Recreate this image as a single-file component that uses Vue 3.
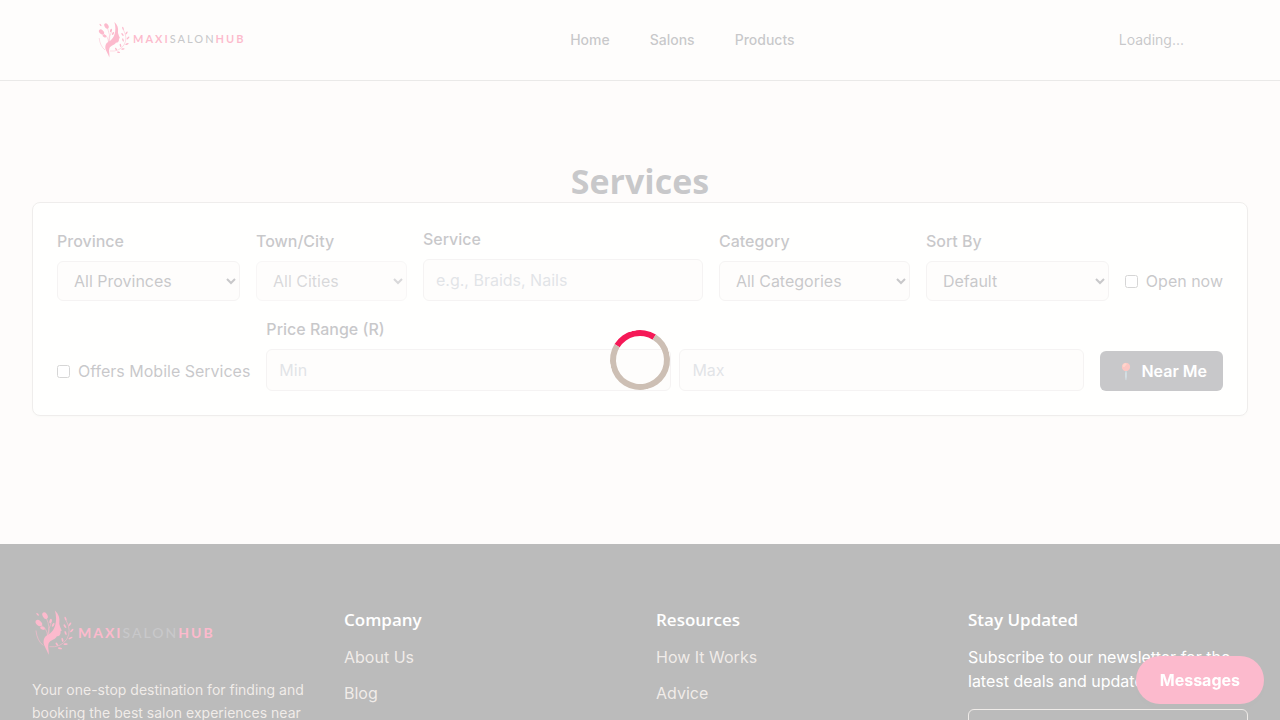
<script setup>
import { ref } from 'vue'

const navLinks = ['Home', 'Salons', 'Products']
const province = ref('All Provinces')
const city = ref('All Cities')
const service = ref('')
const category = ref('All Categories')
const sortBy = ref('Default')
const openNow = ref(false)
const mobile = ref(false)
const minPrice = ref('')
const maxPrice = ref('')
const email = ref('')
const columns = [
  { title: 'Company', links: ['About Us', 'Blog'] },
  { title: 'Resources', links: ['How It Works', 'Advice'] },
]
</script>

<template>
  <div class="page">
    <svg class="symbols" aria-hidden="true">
      <symbol id="flora" viewBox="0 0 37 40">
        <g fill="#f51957">
          <path d="M18.400 2C21.500 5 22.500 8 22 11.500C21.700 13 22.500 14 22.800 15.500L23.900 18L22.900 18.800L23 20C22.500 22.300 21.500 22.800 20 22.600C18.500 25.500 15 25.500 13.500 28C12.300 31 14 34 13.300 37.500C12.500 34 9 30 9.300 27C9.500 23 12 22 14.500 20.500C18 18 21 11 18.400 2Z" />
          <ellipse cx="5.500" cy="12" rx="2" ry="3" transform="rotate(-48 5.500 12)" />
          <ellipse cx="10.500" cy="6" rx="1.900" ry="2.900" transform="rotate(-30 10.500 6)" />
          <ellipse cx="4.500" cy="5" rx="0.600" ry="1.400" transform="rotate(-40 4.500 5)" />
          <ellipse cx="8.500" cy="16" rx="1.200" ry="2" transform="rotate(-70 8.500 16)" />
          <ellipse cx="15" cy="10.500" rx="1" ry="1.900" transform="rotate(15 15 10.500)" />
          <ellipse cx="17" cy="13.500" rx="0.800" ry="1.700" transform="rotate(30 17 13.500)" />
          <ellipse cx="27" cy="8.500" rx="0.700" ry="1.700" transform="rotate(-20 27 8.500)" />
          <ellipse cx="30.500" cy="13" rx="0.700" ry="1.700" transform="rotate(35 30.500 13)" />
          <ellipse cx="26.500" cy="14.500" rx="0.700" ry="1.700" transform="rotate(-35 26.500 14.500)" />
          <ellipse cx="32" cy="18" rx="0.700" ry="1.800" transform="rotate(45 32 18)" />
          <ellipse cx="27" cy="20" rx="0.700" ry="1.700" transform="rotate(-20 27 20)" />
          <ellipse cx="31" cy="24" rx="0.700" ry="1.800" transform="rotate(65 31 24)" />
          <ellipse cx="24.500" cy="25.500" rx="0.700" ry="1.700" transform="rotate(-15 24.500 25.500)" />
          <ellipse cx="27" cy="29" rx="0.700" ry="1.700" transform="rotate(85 27 29)" />
          <ellipse cx="20" cy="29" rx="0.700" ry="1.500" transform="rotate(-35 20 29)" />
          <ellipse cx="22.500" cy="32.300" rx="0.700" ry="1.700" transform="rotate(-80 22.500 32.300)" />
        </g>
        <g fill="none" stroke="#f51957" stroke-width="0.500">
          <path d="M11.500 8Q15 15 12.500 22M7 13.500Q12 16 12.500 22M15.500 12Q13 16 13.500 21" />
          <path d="M27.500 10Q32 18 28 25Q23 32 14 31" />
          <path d="M3.200 18Q4 26 9 30" />
        </g>
      </symbol>
    </svg>

    <header class="header">
      <a href="#" class="brand"><svg aria-hidden="true"><use href="#flora" /></svg><b>MAXI<span>SALON</span>HUB</b></a>
      <nav class="nav">
        <a v-for="l in navLinks" :key="l" href="#">{{ l }}</a>
      </nav>
      <span>Loading...</span>
    </header>

    <main class="main">
      <h1>Services</h1>
      <form class="filters" @submit.prevent>
        <div class="field province">
          <label for="province">Province</label>
          <select id="province" v-model="province"><option>All Provinces</option></select>
        </div>
        <div class="field city">
          <label for="city">Town/City</label>
          <select id="city" v-model="city" disabled><option>All Cities</option></select>
        </div>
        <div class="field service">
          <label for="service">Service</label>
          <input id="service" v-model="service" type="text" placeholder="e.g., Braids, Nails">
        </div>
        <div class="field category">
          <label for="category">Category</label>
          <select id="category" v-model="category"><option>All Categories</option></select>
        </div>
        <div class="field province">
          <label for="sort">Sort By</label>
          <select id="sort" v-model="sortBy"><option>Default</option></select>
        </div>
        <label class="check"><input v-model="openNow" type="checkbox">Open now</label>
        <label class="check"><input v-model="mobile" type="checkbox">Offers Mobile Services</label>
        <div class="field price">
          <label for="min">Price Range (R)</label>
          <div class="range">
            <input id="min" v-model="minPrice" type="text" placeholder="Min">
            <input v-model="maxPrice" type="text" placeholder="Max" aria-label="Maximum price">
          </div>
        </div>
        <button class="near" type="button"><span>📍</span>Near Me</button>
      </form>
    </main>

    <footer class="footer">
      <div>
        <div class="brand brand-large"><svg aria-hidden="true"><use href="#flora" /></svg><b>MAXI<span>SALON</span>HUB</b></div>
        <p class="about">Your one-stop destination for finding and booking the best salon experiences near you.</p>
      </div>
      <div v-for="c in columns" :key="c.title">
        <h2>{{ c.title }}</h2>
        <ul>
          <li v-for="l in c.links" :key="l"><a href="#">{{ l }}</a></li>
        </ul>
      </div>
      <div>
        <h2>Stay Updated</h2>
        <p class="news">Subscribe to our newsletter for the latest deals and updates.</p>
        <input v-model="email" class="email" type="email" aria-label="Email address">
      </div>
    </footer>

    <button class="messages" type="button">Messages</button>
    <div class="overlay" role="status" aria-label="Loading"><div class="spinner"></div></div>
  </div>
</template>

<style>
body {
  overflow: hidden;
  background: #faf6f1;
}
</style>

<style scoped>
.page {
  height: 100vh;
  overflow: hidden;
  color: #48484f;
  background: #faf6f1;
  font: 16px/24px Inter, "Liberation Sans", sans-serif;
}
.page * { box-sizing: border-box; }
a { color: inherit; text-decoration: none; }
.symbols { position: absolute; width: 0; height: 0; }
.brand {
  display: flex;
  align-items: center;
  width: 150px;
  height: 40px;
  color: #f51957;
  font: 11px/38px Lato, sans-serif;
  letter-spacing: 2px;
}
.brand svg { flex: none; width: 37px; height: 40px; }
.brand b { height: 40px; }
.brand span { color: #48484f; font-weight: 500; }
.brand-large { width: 188px; height: 50px; font-size: 14px; line-height: 50px; }
.brand-large svg { width: 46px; height: 50px; }
.brand-large b { height: 50px; }
.header {
  display: flex;
  align-items: center;
  justify-content: space-between;
  height: 81px;
  padding: 0 96px;
  border-bottom: 1px solid #b8b5b3;
  background: #fbf9f5;
  font-size: 14px;
}
.nav { display: flex; gap: 40px; font-weight: 500; }
.main { padding: 80px 32px 128px; }
h1, h2 { margin: 0; font-family: "Open Sans", "Noto Sans", sans-serif; }
h1 { font-size: 34px; line-height: 41px; font-weight: 700; text-align: center; }
.filters {
  display: flex;
  flex-wrap: wrap;
  align-items: flex-end;
  gap: 16px;
  padding: 24px;
  border: 1px solid #cac4bf;
  border-radius: 8px;
  background: #fefdfb;
  box-shadow: 0 1px 2px rgba(0, 0, 0, 0.05);
}
.field { display: flex; flex-direction: column; gap: 8px; min-width: 0; font-weight: 500; }
.province { flex: 1 1 175px; }
.city { flex: 1 1 143px; }
.service { flex: 1 1 272px; }
.category { flex: 1 1 183px; }
.price { flex: 1 1 400px; }
select, .field input, .email {
  width: 100%;
  min-width: 0;
  margin: 0;
  border: 1px solid #dcd8d5;
  border-radius: 6px;
  background: #faf7f4;
  color: #48484f;
  font: 400 16px/24px Inter, sans-serif;
}
select { height: 40px; padding: 0 12px; }
select:disabled { background: #faf7f4; opacity: 0.7; }
.field input { height: 42px; padding: 8px 12px; }
.field input::placeholder { color: #9ca3af; }
.range { display: flex; gap: 8px; }
.check { display: flex; align-items: center; gap: 8px; height: 40px; white-space: nowrap; }
.check input { width: 13px; height: 13px; margin: 0; }
.near {
  display: flex;
  align-items: center;
  gap: 5px;
  height: 40px;
  padding: 0 16px;
  border: 0;
  border-radius: 6px;
  background: #48484f;
  color: #fff;
  font: 600 16px/24px Inter, sans-serif;
}
.footer {
  display: grid;
  grid-template-columns: repeat(4, 1fr);
  gap: 32px;
  padding: 64px 32px;
  background: #1c1c1c;
  color: #fff;
}
.about { margin: 20px 0 0; font-size: 14px; line-height: 23px; color: #cdbfb4; }
h2 { font-size: 17px; line-height: 23px; font-weight: 600; }
ul { display: grid; gap: 12px; margin: 14px 0 0; padding: 0; list-style: none; color: #cdbfb4; }
.news { margin: 14px 0 16px; }
.email { height: 42px; background: transparent; border-color: #cdbfb4; }
.messages {
  position: fixed;
  right: 16px;
  bottom: 16px;
  height: 48px;
  padding: 0 24px;
  border: 0;
  border-radius: 24px;
  background: #f51957;
  color: #fff;
  font: 700 16px/24px Inter, sans-serif;
  box-shadow: 0 4px 12px rgba(0, 0, 0, 0.1);
}
.overlay {
  position: fixed;
  inset: 0;
  display: grid;
  place-items: center;
  background: rgba(255, 255, 255, 0.7);
}
.spinner {
  width: 60px;
  height: 60px;
  border: 6px solid #cdbfb4;
  border-top-color: #f51957;
  border-radius: 50%;
  transform: rotate(-13deg);
}
</style>
